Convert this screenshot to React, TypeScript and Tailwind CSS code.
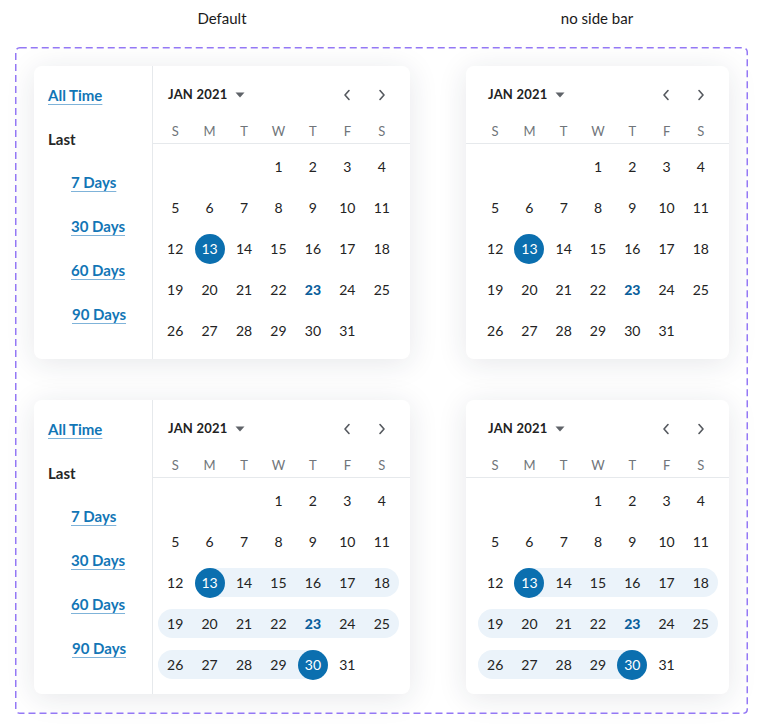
import React from 'react'

const FONT = { fontFamily: 'Lato, "Noto Sans", sans-serif' }

const WEEKDAYS = ['S', 'M', 'T', 'W', 'T', 'F', 'S']
const ROWS: (number | null)[][] = [
  [null, null, null, 1, 2, 3, 4],
  [5, 6, 7, 8, 9, 10, 11],
  [12, 13, 14, 15, 16, 17, 18],
  [19, 20, 21, 22, 23, 24, 25],
  [26, 27, 28, 29, 30, 31, null],
]

const TODAY = 23

function Caret() {
  return (
    <svg width="10" height="6" viewBox="0 0 10 6" className="ml-[8px] mt-[1px]">
      <path d="M0.5 0.5h9L5 5.5z" fill="#5f6368" />
    </svg>
  )
}

function Chevron({ dir }: { dir: 'left' | 'right' }) {
  return (
    <svg width="8" height="12" viewBox="0 0 8 12">
      <path
        d={dir === 'left' ? 'M6 1.5L2 6l4 4.5' : 'M2 1.5L6 6l-4 4.5'}
        fill="none"
        stroke="#55595f"
        strokeWidth="1.6"
        strokeLinecap="round"
        strokeLinejoin="round"
      />
    </svg>
  )
}

function DayCell({
  day,
  col,
  start,
  end,
}: {
  day: number | null
  col: number
  start?: number
  end?: number
}) {
  const ranged = start !== undefined && end !== undefined
  const inRange = ranged && day !== null && day >= start! && day <= end!
  const isStart = ranged && day === start
  const isEnd = ranged && day === end
  const selected = day === 13 || isEnd
  const rowStart = col === 0
  const rowEnd = col === 6

  let band = ''
  if (inRange) {
    if (isStart) band = 'left-1/2 right-0'
    else if (isEnd) band = rowStart ? 'left-0 right-1/2 rounded-l-full' : 'left-0 right-1/2'
    else band = 'left-0 right-0'
    if (!isStart && !isEnd && rowStart) band += ' rounded-l-full'
    if (!isEnd && rowEnd) band += ' rounded-r-full'
  }

  return (
    <div className="relative h-[41px] flex items-center justify-center">
      {inRange && (
        <span className={`absolute top-[6px] h-[29px] bg-[#ebf3fa] ${band}`} />
      )}
      {day !== null && (
        <span
          className={`relative flex items-center justify-center w-[30px] h-[30px] rounded-full text-[14px] ${
            selected
              ? 'bg-[#0b6faf] text-white'
              : day === TODAY
              ? 'text-[#0b5f9c] font-black'
              : 'text-[#232323]'
          }`}
        >
          {day}
        </span>
      )}
    </div>
  )
}

function Calendar({ range, padL }: { range?: boolean; padL: string }) {
  return (
    <div className="flex flex-col h-full">
      <div className={`h-[56px] pt-[1px] flex items-center ${padL} pr-[11px]`}>
        <div className="flex-1 flex items-center pl-[10px]">
          <span className="text-[13px] font-bold text-[#222] tracking-[0.2px]">JAN 2021</span>
          <Caret />
        </div>
        <div className="w-[34.6px] flex justify-center">
          <Chevron dir="left" />
        </div>
        <div className="w-[34.6px] flex justify-center">
          <Chevron dir="right" />
        </div>
      </div>
      <div className={`grid grid-cols-7 h-[10px] items-center ${padL} pr-[11px]`}>
        {WEEKDAYS.map((w, i) => (
          <span key={i} className="text-center text-[13px] text-[#70757a]">
            {w}
          </span>
        ))}
      </div>
      <div className="mt-[11px] border-b border-[#e6e9ec]" />
      <div className={`grid grid-cols-7 pt-[2px] ${padL} pr-[11px]`}>
        {ROWS.map((row, r) =>
          row.map((d, c) => (
            <DayCell
              key={`${r}-${c}`}
              day={d}
              col={c}
              start={range ? 13 : undefined}
              end={range ? 30 : undefined}
            />
          ))
        )}
      </div>
    </div>
  )
}

function Sidebar() {
  const link = 'text-[15px] font-bold text-[#1276b6] underline underline-offset-[3px] decoration-[#7fb3d9]'
  return (
    <div className="w-[119px] shrink-0 border-r border-[#e6e9ec] pl-[14px] pt-[18px] flex flex-col">
      <div className="h-[22px] flex items-center">
        <span className={link}>All Time</span>
      </div>
      <div className="h-[22px] mt-[22px] flex items-center">
        <span className="text-[15px] font-bold text-[#262626]">Last</span>
      </div>
      {['7 Days', '30 Days', '60 Days', '90 Days'].map((t, i) => (
        <div key={t} className="h-[22px] mt-[21.7px] flex items-center pl-[23px]">
          <span className={`${link} ${i === 3 ? 'ml-[1px]' : ''}`}>{t}</span>
        </div>
      ))}
    </div>
  )
}

function Card({ side, range, tall }: { side?: boolean; range?: boolean; tall?: boolean }) {
  return (
    <div
      className={`bg-white rounded-[8px] shadow-[0_4px_30px_rgba(30,40,60,0.11)] flex ${
        side ? 'w-[376px]' : 'w-[263px]'
      } ${tall ? 'h-[294px]' : 'h-[293px]'}`}
    >
      {side && <Sidebar />}
      <div className="flex-1">
        <Calendar range={range} padL={side ? 'pl-[5px]' : 'pl-[12px]'} />
      </div>
    </div>
  )
}

export default function App() {
  return (
    <div className="w-[767px] h-[726px] bg-white" style={FONT}>
      <div className="h-[47px] flex">
        <div className="w-[444px] flex justify-center pt-[7px]">
          <span className="text-[15px] text-[#1a1a1a]">Default</span>
        </div>
        <div className="w-[306px] flex justify-center pt-[7px]">
          <span className="text-[15px] text-[#1a1a1a]">no side bar</span>
        </div>
      </div>
      <div className="relative ml-[15px] w-[733px] h-[667px] p-[19px] pr-[19px] flex flex-col gap-[41px]">
        <svg className="absolute inset-0 pointer-events-none" width="733" height="667">
          <rect
            x="0.75"
            y="0.75"
            width="731.5"
            height="665.5"
            rx="4"
            fill="none"
            stroke="#9478f5"
            strokeWidth="1.5"
            strokeDasharray="7 4"
          />
        </svg>
        <div className="flex justify-between">
          <Card side />
          <Card />
        </div>
        <div className="flex justify-between">
          <Card side range tall />
          <Card range tall />
        </div>
      </div>
    </div>
  )
}
